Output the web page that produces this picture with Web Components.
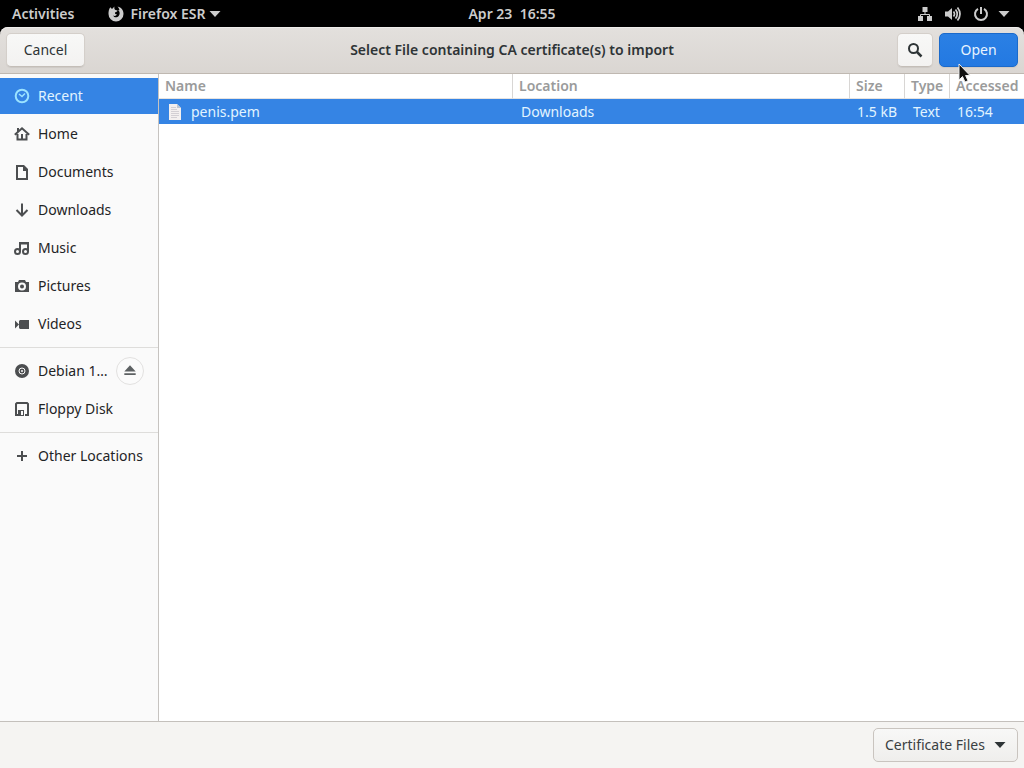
<!DOCTYPE html>
<html lang="en">
<head>
<meta charset="utf-8">
<title>Select File</title>
<style>
html { height: 100%; }
body { margin: 0; min-height: 100%; display: flex; background: #000; font: 14px/20px "Noto Sans", "Open Sans", sans-serif; color: #2e3436; }
file-app { flex: 1; }
</style>
</head>
<body>
<file-app></file-app>
<script>
function define(name, html, setup) {
  const template = document.createElement('template');
  template.innerHTML = html;
  customElements.define(name, class extends HTMLElement {
    connectedCallback() {
      if (this.shadowRoot) return;
      const root = this.attachShadow({ mode: 'open' });
      root.append(template.content.cloneNode(true));
      if (setup) setup(this, root);
    }
  });
}

const icons = {
  recent: '<circle cx="8" cy="8" r="6.300" fill="none" stroke="currentColor" stroke-width="2"/><path d="M5 6l3 2.500L11 5.500" fill="none" stroke="currentColor" stroke-width="1.500"/>',
  home: '<path d="M.800 8.700L8 2.300l7.200 6.400M3.500 8v5.500h9V8" fill="none" stroke="currentColor" stroke-width="2"/><path d="M7 8h2v6H7zM3 2h2v3l-2 2z"/>',
  documents: '<path fill-rule="evenodd" d="M2 1h8l4 4v11H2zM4 3v11h8V7H9V3z"/>',
  downloads: '<path d="M8 1.500v12M2.500 8L8 13.500 13.500 8" fill="none" stroke="currentColor" stroke-width="2"/>',
  music: '<g fill="none" stroke="currentColor" stroke-width="2"><circle cx="3.500" cy="11.500" r="2.500"/><circle cx="11.500" cy="11.500" r="2.500"/><path d="M6 11.500V3h8v8.500M6 3.500h8"/></g>',
  pictures: '<path fill-rule="evenodd" d="M1 4h3l1-2h6l1 2h3v10H1zM8 4.500a4 4 0 1 0 0 8 4 4 0 0 0 0-8z"/><circle cx="8" cy="8.500" r="2"/>',
  videos: '<path d="M1 4.500L5 8.500 1 12.500zM5 5l1-1h9v9H6l-1-1z"/>',
  disc: '<circle cx="8" cy="8" r="7"/><g fill="none" stroke="#fafafa"><circle cx="8" cy="8" r="3"/></g><circle cx="8" cy="8" r="1" fill="#fafafa"/>',
  floppy: '<path d="M4 14H2V3l1-1h10l1 1v11h-3" fill="none" stroke="currentColor" stroke-width="2"/><path fill-rule="evenodd" d="M4 9h6v6H4zM7 10v4h2v-4z"/>',
  plus: '<path d="M8 3v10M3 8h10" stroke="currentColor" stroke-width="2"/>',
  eject: '<path d="M8 1.500l6.500 7h-13zM1.500 10.500h13v2h-13z"/>',
  search: '<circle cx="6.500" cy="6.500" r="4.500" fill="none" stroke="currentColor" stroke-width="2"/><path d="M10 10l4.500 4.500" stroke="currentColor" stroke-width="2.500"/>',
  caret: '<path d="M2.500 5h11L8 11z"/>',
  firefox: '<path d="M2.300 1.300L4 3l2.500-2.500C6 2 6.500 3.500 7.500 4l2 .5-.5 1-2 1 .2 1.500 1.800.5c-1 1.500-2.300 1.800-3.800 1 .8 2.300 4 2.500 5.500.5C12.500 7.500 11.500 5 10 4l1.500.3C11.300 2.800 10.500 1.500 9.500.5c4 .8 6 4 6 7.500a7.500 7.500 0 0 1-15 0c0-2 .3-4.800 1.800-6.700z"/>',
  network: '<path d="M5.500 1h5v5h-5zM1 10h5v5H1zM10 10h5v5h-5z"/><path d="M8 5v3.500M3.500 11V8.500h9V11" fill="none" stroke="currentColor"/>',
  sound: '<path d="M0 5.500h3l4-3.500v12l-4-3.500H0z"/><path d="M8.500 5.500q2 2.500 0 5M10.500 3.500q3.500 4.500 0 9M12.500 1.500q5 6.500 0 13" fill="none" stroke="currentColor" stroke-width="1.700"/>',
  power: '<path d="M5 2.800a6 6 0 1 0 6 0M8 1v7" fill="none" stroke="currentColor" stroke-width="2"/>'
};

define('ui-icon', `<style>
:host { display: block; width: 16px; height: 16px; flex: none; }
svg { display: block; width: 100%; height: 100%; fill: currentColor; }
</style><svg viewBox="0 0 16 16" aria-hidden="true"></svg>`, (host, root) => {
  root.querySelector('svg').innerHTML = icons[host.getAttribute('name')];
});

define('top-bar', `<style>
:host { display: grid; grid-template-columns: 1fr auto 1fr; align-items: center; height: 27px; background: #000; color: #ccc; font-weight: 600; }
button { font: inherit; color: inherit; background: none; border: 0; padding: 0; display: flex; align-items: center; gap: 6px; }
.left { display: flex; gap: 34px; padding-left: 12px; }
.date { white-space: pre; }
.left button:last-child { gap: 2px; }
.left ui-icon:first-child { margin-right: 4px; }
.right { justify-self: end; gap: 12px; padding-right: 12px; }
.right ui-icon:last-child { margin-left: -5px; }
</style>
<div class="left"><button>Activities</button><button><ui-icon name="firefox"></ui-icon>Firefox ESR<ui-icon name="caret"></ui-icon></button></div>
<button class="date">Apr 23  16:55</button>
<button class="right" aria-label="System menu"><ui-icon name="network"></ui-icon><ui-icon name="sound"></ui-icon><ui-icon name="power"></ui-icon><ui-icon name="caret"></ui-icon></button>`);

define('push-button', `<style>
:host { display: block; }
button { font: inherit; color: #2e3436; height: 34px; min-width: 36px; width: 100%; padding: 0 9px; display: flex; align-items: center; justify-content: center; border: 1px solid #d4cfca; border-bottom-color: #c4beb8; border-radius: 5px; background: linear-gradient(#f8f8f7, #f3f2f1); box-shadow: 0 1px 1px #0001; }
:host([primary]) button { color: #e8f4ff; border-color: #1b6acb; background: linear-gradient(#2b80e4, #2379e2); }
</style><button><slot></slot></button>`, (host, root) => {
  const label = host.getAttribute('label');
  if (label) root.querySelector('button').setAttribute('aria-label', label);
});

define('dialog-header', `<style>
:host { display: grid; grid-template-columns: 1fr auto 1fr; align-items: center; box-sizing: border-box; height: 47px; padding: 0 6px; border-bottom: 1px solid #bfb8b1; border-radius: 8px 8px 0 0; background: linear-gradient(#e3e0dd, #dad6d2); box-shadow: inset 0 1px #efedeb; }
h1 { margin: 0; font-size: 14px; line-height: 20px; font-weight: 600; }
.wide { width: 79px; }
.actions { display: flex; gap: 6px; justify-content: end; }
.open { position: relative; }
.cursor { position: absolute; left: 19px; top: 30px; width: 13px; height: 20px; z-index: 1; }
</style>
<push-button class="wide">Cancel</push-button>
<h1>Select File containing CA certificate(s) to import</h1>
<div class="actions"><push-button label="Search"><ui-icon name="search"></ui-icon></push-button>
<div class="open"><push-button class="wide" primary>Open</push-button>
<svg class="cursor" viewBox="0 0 13 20" aria-hidden="true"><path d="M1 1v16l3.500-3.500L7 19l3-1.300-2.400-5.200H12z" fill="#111" stroke="#eee"/></svg></div></div>`);

define('place-item', `<style>
:host { display: block; }
.row { display: flex; align-items: center; height: 36px; padding: 0 14px; color: #4c4e50; }
a { flex: 1; display: flex; align-items: center; gap: 8px; color: inherit; text-decoration: none; white-space: nowrap; }
span { color: #1f2426; }
:host([selected]) .row { background: #3584e4; color: #9be3ff; }
:host([selected]) span { color: #e2f4ff; }
</style><div class="row"><a href="#"><ui-icon></ui-icon><span><slot></slot></span></a><slot name="action"></slot></div>`, (host, root) => {
  const icon = document.createElement('ui-icon');
  icon.setAttribute('name', host.getAttribute('icon'));
  root.querySelector('ui-icon').replaceWith(icon);
});

define('places-sidebar', `<style>
:host { display: flex; flex-direction: column; gap: 2px; box-sizing: border-box; width: 159px; padding-top: 4px; background: #fafafa; border-right: 1px solid #c6c3c0; }
hr { width: 100%; height: 1px; margin: 3px 0; border: 0; background: #dedddb; }
button { width: 28px; height: 28px; padding: 0; display: grid; place-items: center; border: 1px solid #e2e1e0; border-radius: 50%; background: #fbfbfb; color: #5d6163; }
button ui-icon { width: 14px; height: 14px; }
</style>
<place-item icon="recent" selected>Recent</place-item>
<place-item icon="home">Home</place-item>
<place-item icon="documents">Documents</place-item>
<place-item icon="downloads">Downloads</place-item>
<place-item icon="music">Music</place-item>
<place-item icon="pictures">Pictures</place-item>
<place-item icon="videos">Videos</place-item>
<hr>
<place-item icon="disc">Debian 1…<button slot="action" aria-label="Eject"><ui-icon name="eject"></ui-icon></button></place-item>
<place-item icon="floppy">Floppy Disk</place-item>
<hr>
<place-item icon="plus">Other Locations</place-item>`);

define('file-table', `<style>
:host { display: block; background: #fff; min-width: 0; }
table { width: 100%; table-layout: fixed; border-spacing: 0; }
th, td { text-align: left; white-space: nowrap; box-sizing: border-box; }
th { height: 25px; padding: 0 0 0 6px; font-weight: 600; color: #9a9b9b; border-right: 1px solid #d8d6d4; border-bottom: 1px solid #e5e3e2; }
th:last-child { border-right: 0; }
td { height: 25px; padding: 0 0 0 8px; background: #3584e4; color: #e2f4ff; }
td.tight { padding-left: 7px; }
.location { width: 337px; } .size { width: 55px; } .type { width: 45px; } .accessed { width: 74px; }
.file { display: flex; align-items: center; gap: 8px; }
svg { width: 16px; height: 16px; }
</style>
<table>
<colgroup><col><col class="location"><col class="size"><col class="type"><col class="accessed"></colgroup>
<thead><tr><th>Name</th><th>Location</th><th>Size</th><th>Type</th><th>Accessed</th></tr></thead>
<tbody><tr><td><div class="file"><svg viewBox="0 0 16 16" aria-hidden="true"><path d="M2 0h8l4 4v12H2z" fill="#f3efef"/><path d="M10 0l4 4h-4z" fill="#bfc6d2"/><path d="M4 3.500h5M4 5.500h6M4 7.500h8M4 9.500h8M4 11.500h8M4 13.500h6" stroke="#d3cfd4"/></svg>penis.pem</div></td><td>Downloads</td><td class="tight">1.5 kB</td><td>Text</td><td class="tight">16:54</td></tr></tbody>
</table>`);

define('filter-bar', `<style>
:host { display: flex; justify-content: end; align-items: center; box-sizing: border-box; height: 47px; padding: 0 6px; border-top: 1px solid #c4c0bc; background: #f5f4f2; }
label { display: grid; align-items: center; }
select, ui-icon { grid-area: 1 / 1; }
select { appearance: none; font: inherit; color: #3a4042; width: 145px; height: 34px; padding: 0 28px 0 11px; border: 1px solid #c9c4bf; border-radius: 5px; background: linear-gradient(#f8f8f7, #efeeec); }
ui-icon { justify-self: end; margin-right: 10px; pointer-events: none; }
</style><label><select aria-label="File type"><option>Certificate Files</option><option>All Files</option></select><ui-icon name="caret"></ui-icon></label>`);

define('file-app', `<style>
:host { display: flex; flex-direction: column; }
main { flex: 1; display: grid; grid-template-columns: auto 1fr; background: #fff; }
</style>
<top-bar></top-bar><dialog-header></dialog-header>
<main><places-sidebar></places-sidebar><file-table></file-table></main>
<filter-bar></filter-bar>`);
</script>
</body>
</html>
